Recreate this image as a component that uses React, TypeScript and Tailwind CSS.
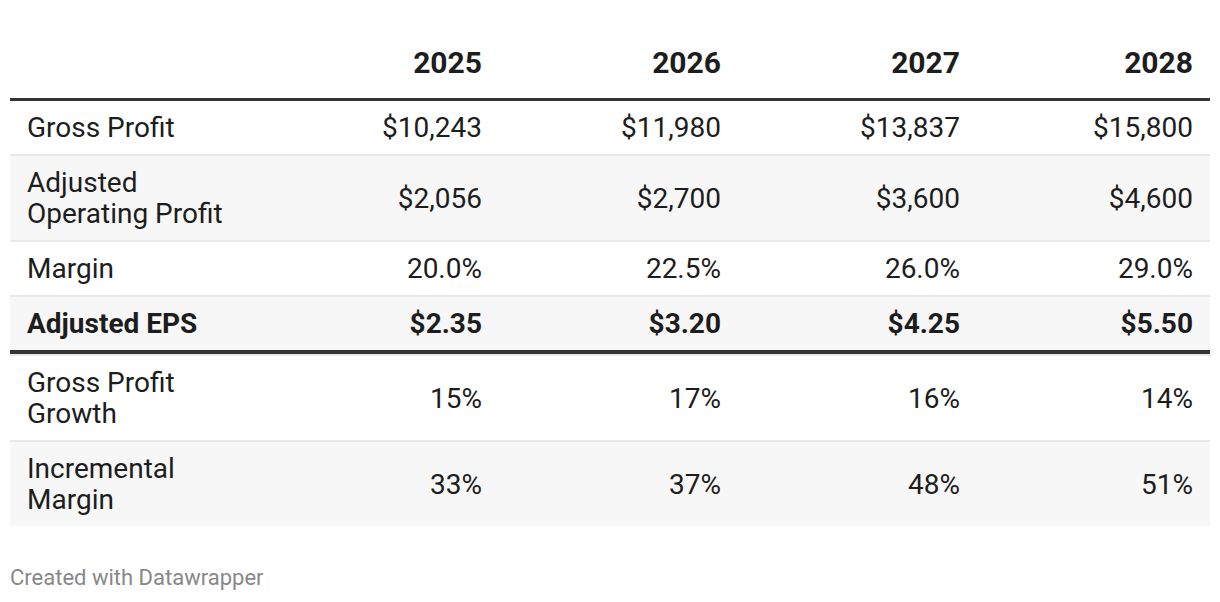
import React from "react";

type Row = {
  label: string[];
  values: string[];
  bold?: boolean;
  shaded?: boolean;
  border: "light" | "thick" | "none";
};

const years = ["2025", "2026", "2027", "2028"];

const rows: Row[] = [
  { label: ["Gross Profit"], values: ["$10,243", "$11,980", "$13,837", "$15,800"], border: "light" },
  { label: ["Adjusted", "Operating Profit"], values: ["$2,056", "$2,700", "$3,600", "$4,600"], shaded: true, border: "light" },
  { label: ["Margin"], values: ["20.0%", "22.5%", "26.0%", "29.0%"], border: "light" },
  { label: ["Adjusted EPS"], values: ["$2.35", "$3.20", "$4.25", "$5.50"], bold: true, shaded: true, border: "thick" },
  { label: ["Gross Profit", "Growth"], values: ["15%", "17%", "16%", "14%"], border: "light" },
  { label: ["Incremental", "Margin"], values: ["33%", "37%", "48%", "51%"], shaded: true, border: "none" },
];

const cols = "grid grid-cols-[250px_239px_239px_239px_233px]";

export default function App() {
  return (
    <div
      className="min-h-[602px] bg-white px-[10px] pt-[47px] text-[#1d1d1d]"
      style={{ fontFamily: "Roboto, 'Liberation Sans', sans-serif" }}
    >
      <div className={`${cols} border-b-[3px] border-[#333333] pb-[19px] text-[30px] font-bold leading-[32px]`}>
        <div />
        {years.map((y) => (
          <div key={y} className="pr-[17px] text-right">
            {y}
          </div>
        ))}
      </div>

      {rows.map((r, i) => (
        <React.Fragment key={i}>
          <div
            className={`${cols} items-center py-[11px] text-[28px] leading-[31px] ${r.shaded ? "bg-[#f7f7f7]" : "bg-white"} ${r.bold ? "font-bold" : ""} ${
              r.border === "light"
                ? "border-b-2 border-[#e8e8e8]"
                : r.border === "thick"
                ? "border-b-4 border-[#333333]"
                : ""
            }`}
          >
            <div className="pl-[17px]">
              {r.label.map((l) => (
                <div key={l}>{l}</div>
              ))}
            </div>
            {r.values.map((v, j) => (
              <div key={j} className="pr-[17px] text-right">
                {v}
              </div>
            ))}
          </div>
          {r.border === "thick" && <div className="h-[2px] bg-[#e8e8e8]" />}
        </React.Fragment>
      ))}

      <div className="mt-[40px] text-[22px] leading-[24px] text-[#888888]">Created with Datawrapper</div>
    </div>
  );
}
